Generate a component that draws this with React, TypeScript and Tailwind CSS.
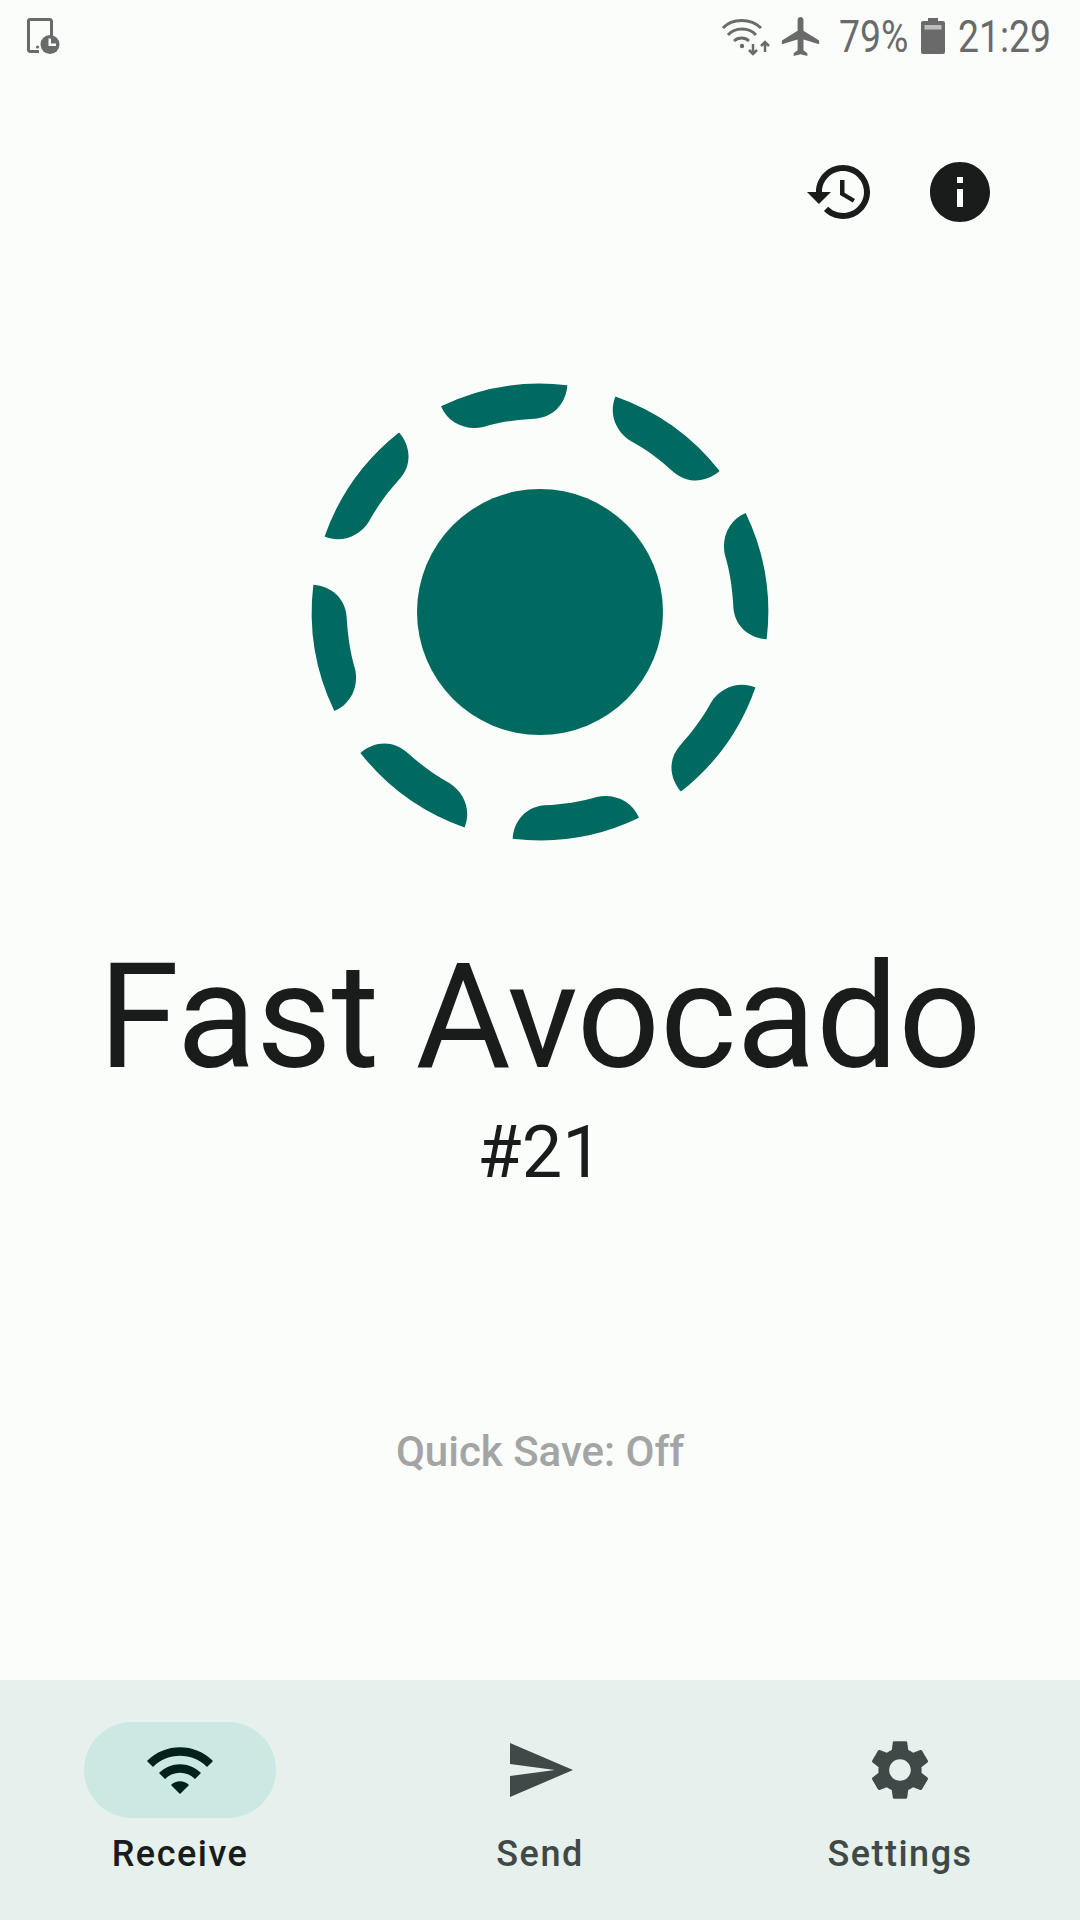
import React from "react";

const segmentAngles = [0, 45, 90, 135, 180, 225, 270, 315];

function Logo() {
  return (
    <svg width="500" height="500" viewBox="-750 -750 1500 1500" className="text-[#006a60]" fill="currentColor">
      <circle cx="0" cy="0" r="369" />
      {segmentAngles.map((a) => (
        <path
          key={a}
          transform={`rotate(${a})`}
          d="M-297 -617A685 685 0 0 1 82 -680C78 -625 40 -583 -15 -580C-70 -577 -120 -570 -170 -555C-220 -543 -275 -565 -297 -617Z"
        />
      ))}
    </svg>
  );
}

function TabletClockIcon() {
  return (
    <svg width="40" height="42" viewBox="24 15 40 42" className="text-[#6a6a6a]">
      <path d="M39 51.5H30a1.5 1.5 0 0 1-1.5-1.5V21a1.5 1.5 0 0 1 1.5-1.5H50a1.5 1.5 0 0 1 1.5 1.5V36" fill="none" stroke="currentColor" strokeWidth="3" />
      <circle cx="37.500" cy="47" r="1.600" fill="currentColor" />
      <circle cx="50" cy="44.500" r="9.500" fill="currentColor" />
      <path d="M48.500 38.500h2.500v5h5v2.500h-7.500z" fill="#fbfdfb" />
    </svg>
  );
}

function WifiArrowsIcon() {
  return (
    <svg width="54" height="42" viewBox="0 0 54 42" className="text-[#6a6a6a]" fill="none" stroke="currentColor" strokeWidth="3">
      <path d="M3 13C12 3 31 3 41 13" />
      <path d="M8 20C15 12 29 12 36 20" />
      <path d="M14 26C18 22 25 22 29 26" />
      <circle cx="22" cy="31" r="2.200" fill="currentColor" stroke="none" />
      <path d="M33 29v10M29 35l4 4 4-4" strokeWidth="2.500" />
      <path d="M45 37V27M41 31l4-4 4 4" strokeWidth="2.500" />
    </svg>
  );
}

function BatteryIcon() {
  return (
    <svg width="24" height="36" viewBox="0 0 24 36" className="text-[#6a6a6a]">
      <path d="M7 0h10v3h5a2 2 0 0 1 2 2v29a2 2 0 0 1-2 2H2a2 2 0 0 1-2-2V5a2 2 0 0 1 2-2h5z" fill="currentColor" />
      <rect x="3.500" y="7" width="17" height="4.500" fill="#bdbdbd" />
    </svg>
  );
}

function StatusBar() {
  return (
    <div className="h-[72px] flex items-center justify-between pl-[24px] pr-[26px] text-[#6a6a6a]">
      <TabletClockIcon />
      <div className="flex items-center">
        <WifiArrowsIcon />
        <svg width="47" height="47" viewBox="0 0 24 24" fill="currentColor" className="ml-[4px]">
          <path d="M21 16v-2l-8-5V3.500c0-.83-.67-1.500-1.500-1.500S10 2.670 10 3.500V9l-8 5v2l8-2.500V19l-2 1.500V22l3.500-1 3.500 1v-1.500L13 19v-5.500l8 2.500z" />
        </svg>
        <span className="w-[69px] ml-[14px] text-[45px] leading-none whitespace-nowrap origin-left scale-x-[0.83]">79%</span>
        <div className="ml-[13px]"><BatteryIcon /></div>
        <span className="w-[96px] ml-[13px] text-[45px] leading-none whitespace-nowrap origin-left scale-x-[0.83]">21:29</span>
      </div>
    </div>
  );
}

function NavItem({ label, active, children }: { label: string; active?: boolean; children: React.ReactNode }) {
  return (
    <div className="flex-1 flex flex-col items-center pt-[42px]">
      <div className={`w-[192px] h-[96px] rounded-full flex items-center justify-center ${active ? "bg-[#cce8e2]" : ""}`}>
        {children}
      </div>
      <span className={`mt-[12px] text-[36px] leading-[48px] font-medium tracking-[1.500px] ${active ? "text-[#191c1b]" : "text-[#3f4947]"}`}>
        {label}
      </span>
    </div>
  );
}

export default function App() {
  return (
    <div className="w-[1080px] h-[1920px] flex flex-col bg-[#fbfdfb] font-['Roboto',sans-serif] overflow-hidden">
      <StatusBar />

      <div className="flex justify-end pt-[60px] pr-[60px]">
        <button className="w-[120px] h-[120px] flex items-center justify-center text-[#191c1b]">
          <svg width="72" height="72" viewBox="0 0 24 24" fill="currentColor">
            <path d="M13 3c-4.970 0-9 4.030-9 9H1l3.890 3.890.07.140L9 12H6c0-3.870 3.130-7 7-7s7 3.130 7 7-3.130 7-7 7c-1.930 0-3.680-.79-4.940-2.060l-1.420 1.420C8.270 19.990 10.510 21 13 21c4.970 0 9-4.030 9-9s-4.030-9-9-9zm-1 5v5l4.280 2.540.72-1.210-3.500-2.080V8H12z" />
          </svg>
        </button>
        <button className="w-[120px] h-[120px] flex items-center justify-center text-[#191c1b]">
          <svg width="72" height="72" viewBox="0 0 24 24" fill="currentColor">
            <path d="M12 2C6.480 2 2 6.480 2 12s4.480 10 10 10 10-4.480 10-10S17.520 2 12 2zm1 15h-2v-6h2v6zm0-8h-2V7h2v2z" />
          </svg>
        </button>
      </div>

      <div className="flex-1 flex flex-col items-center pt-[110px]">
        <Logo />
        <h1 className="mt-[76px] text-[146px] leading-[160px] font-normal text-[#191c1b] whitespace-nowrap">Fast Avocado</h1>
        <p className="mt-[10px] text-[72px] leading-[90px] text-[#191c1b]">#21</p>
        <p className="mt-[226px] text-[42px] leading-[56px] font-medium text-[#a3a5a4]">Quick Save: Off</p>
      </div>

      <nav className="h-[240px] flex bg-[#e6f0ed]">
        <NavItem label="Receive" active>
          <svg width="72" height="72" viewBox="0 0 24 24" fill="#00201c">
            <path d="M1 9l2 2c4.970-4.970 13.030-4.970 18 0l2-2C16.930 2.930 7.080 2.930 1 9zm8 8l3 3 3-3c-1.650-1.660-4.340-1.660-6 0zm-4-4l2 2c2.760-2.760 7.240-2.760 10 0l2-2C15.140 9.140 8.870 9.140 5 13z" />
          </svg>
        </NavItem>
        <NavItem label="Send">
          <svg width="72" height="72" viewBox="0 0 24 24" fill="#3f4947">
            <path d="M2.010 21L23 12 2.010 3 2 10l15 2-15 2z" />
          </svg>
        </NavItem>
        <NavItem label="Settings">
          <svg width="72" height="72" viewBox="0 0 24 24" fill="#3f4947">
            <path d="M19.140 12.940c.04-.3.06-.61.06-.94 0-.32-.02-.64-.07-.94l2.030-1.580c.18-.14.23-.41.12-.61l-1.920-3.320c-.12-.22-.37-.29-.59-.22l-2.390.96c-.5-.38-1.030-.7-1.620-.94l-.36-2.540c-.04-.24-.24-.41-.48-.41h-3.840c-.24 0-.43.17-.47.41l-.36 2.540c-.59.24-1.130.57-1.620.94l-2.390-.96c-.22-.08-.47 0-.59.22L2.740 8.870c-.12.21-.08.47.12.61l2.030 1.580c-.05.3-.09.63-.09.94s.02.64.07.94l-2.030 1.580c-.18.14-.23.41-.12.61l1.920 3.320c.12.22.37.29.59.22l2.390-.96c.5.38 1.030.7 1.620.94l.36 2.540c.05.24.24.41.48.41h3.840c.24 0 .44-.17.47-.41l.36-2.540c.59-.24 1.130-.56 1.620-.94l2.390.96c.22.08.47 0 .59-.22l1.920-3.320c.12-.22.07-.47-.12-.61l-2.010-1.580zM12 15.600c-1.980 0-3.600-1.620-3.600-3.600s1.620-3.600 3.600-3.600 3.600 1.620 3.600 3.600-1.620 3.600-3.600 3.600z" />
          </svg>
        </NavItem>
      </nav>
    </div>
  );
}
